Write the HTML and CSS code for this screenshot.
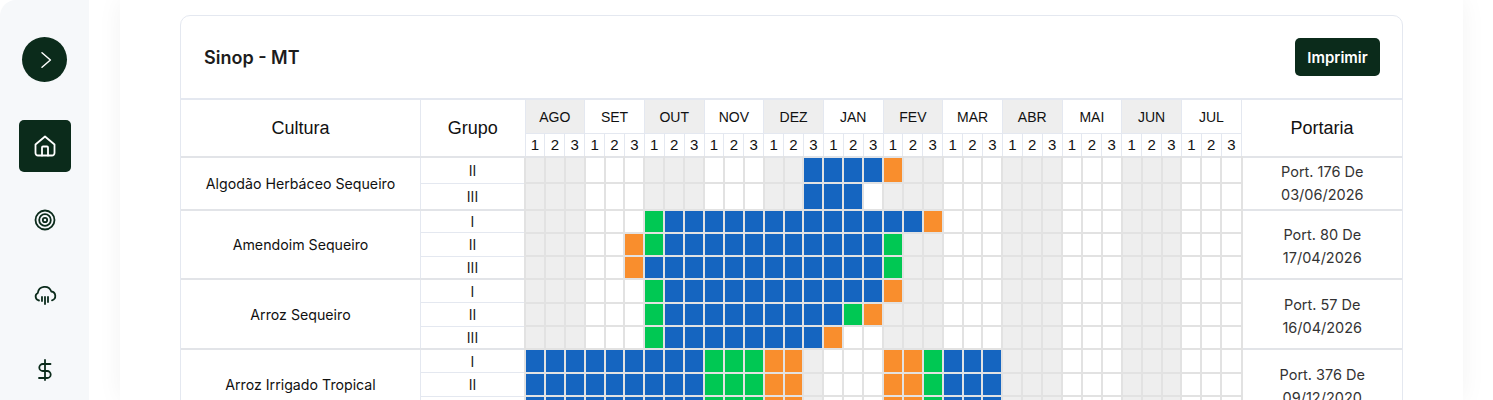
FILE: index.html
```html
<!DOCTYPE html>
<html lang="pt-BR">
<head>
    <meta charset="UTF-8">
    <title>Calendário de Plantio</title>
    <link rel="stylesheet" href="styles.css">
</head>
<body>
    <div class="app">
        <aside class="sidebar">
            <button class="toggle">
                <svg width="24" height="24" viewBox="0 0 24 24" fill="none" stroke="currentColor" stroke-width="1.5" stroke-linecap="round" stroke-linejoin="round"><path d="M9 4.800l8.400 7.200-8.400 7.200"/></svg>
            </button>
            <a class="nav-item active">
                <svg width="24" height="24" viewBox="0 0 24 24" fill="none" stroke="currentColor" stroke-width="1.8" stroke-linecap="round" stroke-linejoin="round"><path d="M2.500 10.500L12 2.500l9.500 8V19a2.500 2.500 0 0 1-2.500 2.500H5A2.500 2.500 0 0 1 2.500 19z"/><path d="M9 21.500v-8a1 1 0 0 1 1-1h4a1 1 0 0 1 1 1v8"/></svg>
            </a>
            <a class="nav-item">
                <svg width="24" height="24" viewBox="0 0 24 24" fill="none" stroke="currentColor" stroke-width="1.800"><circle cx="12" cy="12" r="9.500"/><circle cx="12" cy="12" r="5.800"/><circle cx="12" cy="12" r="2.200"/></svg>
            </a>
            <a class="nav-item">
                <svg width="24" height="24" viewBox="0 0 24 24" fill="none" stroke="currentColor" stroke-width="1.800" stroke-linecap="round" stroke-linejoin="round"><path d="M6 17.500A4 4 0 0 1 4.800 10 7 7 0 0 1 18.300 8.500 4.500 4.500 0 0 1 19 17.300"/><path d="M9 14v4M12 14v7M15 14v5"/></svg>
            </a>
            <a class="nav-item">
                <svg width="24" height="24" viewBox="0 0 24 24" fill="none" stroke="currentColor" stroke-width="1.800" stroke-linecap="round" stroke-linejoin="round"><path d="M12 2v20"/><path d="M17.500 6H9.800a3.500 3.500 0 0 0 0 7h4.400a3.500 3.500 0 0 1 0 7H6"/></svg>
            </a>
        </aside>
        <main class="panel">
            <section class="card">
                <header class="card-header">
                    <h2>Sinop - MT</h2>
                    <button class="print-btn">Imprimir</button>
                </header>
                <table class="calendar">
                    <thead id="calendarHead"></thead>
                    <tbody id="calendarBody"></tbody>
                </table>
            </section>
        </main>
    </div>
    <script src="script.js"></script>
</body>
</html>
```

FILE: styles.css
```css
* {
    box-sizing: border-box;
}
html, body {
    height: 100%;
}
body {
    margin: 0;
    overflow: hidden;
    font-family: Inter, "Liberation Sans", sans-serif;
    background-color: #fff;
    color: #111;
}
.app {
    display: flex;
    height: 400px;
    overflow: hidden;
}
.sidebar {
    width: 89px;
    flex-shrink: 0;
    display: flex;
    flex-direction: column;
    align-items: center;
    background-color: #f6f8fa;
    border-top-left-radius: 16px;
    padding-top: 37px;
}
.toggle {
    width: 45px;
    height: 45px;
    flex-shrink: 0;
    display: flex;
    align-items: center;
    justify-content: center;
    margin-bottom: 38px;
    padding: 0;
    border: none;
    border-radius: 50%;
    background-color: #0b2b1b;
    color: #fff;
}
.nav-item {
    width: 52px;
    height: 52px;
    flex-shrink: 0;
    display: flex;
    align-items: center;
    justify-content: center;
    margin-bottom: 23px;
    border-radius: 5px;
    color: #0b2b1b;
}
.nav-item.active {
    margin-bottom: 22px;
    background-color: #0b2b1b;
    color: #fff;
}
.panel {
    width: 1343px;
    margin-left: 31px;
    flex-shrink: 0;
    padding: 15px 60px 0;
    background-color: #fff;
    box-shadow: 0 0 24px rgba(0, 0, 0, 0.05);
}
.card {
    width: 1223px;
    border: 1px solid #e4e8f0;
    border-radius: 10px 10px 0 0;
    background-color: #fff;
}
.card-header {
    height: 83px;
    display: flex;
    align-items: center;
    justify-content: space-between;
    padding: 0 22px 0 23px;
    border-bottom: 1px solid #e4e8f0;
}
.card-header h2 {
    margin: 0;
    font-size: 18px;
    font-weight: 600;
    color: #1c1c1c;
}
.print-btn {
    height: 38px;
    width: 85px;
    padding: 0;
    border: none;
    border-radius: 5px;
    background-color: #0b2b1b;
    color: #fff;
    font-family: inherit;
    font-size: 15px;
    font-weight: 600;
}
.calendar {
    width: 1221px;
    table-layout: fixed;
    border-collapse: collapse;
    font-family: "Liberation Sans", sans-serif;
}
.calendar th, .calendar td {
    padding: 0;
    text-align: center;
    font-weight: 400;
    border: 1px solid #e4e8f0;
}
.calendar tr > :first-child {
    border-left: none;
}
.calendar tr > :last-child {
    border-right: none;
}
.col-cultura {
    width: 239.500px;
}
.col-grupo {
    width: 104.500px;
}
.col-portaria {
    width: 160.500px;
}
.head-title {
    padding-top: 2px;
    font-size: 18px;
}
.calendar th.head-title {
    padding-top: 2px;
}
.month {
    height: 34px;
    font-size: 14px;
}
.decade {
    height: 23px;
    font-size: 15px;
}
.shaded {
    background-color: #eee;
}
.crop, .group, .portaria {
    font-family: Inter, "Liberation Sans", sans-serif;
    font-size: 14px;
}
.crop {
    font-size: 14.200px;
}
.portaria {
    font-size: 14.500px;
    line-height: 23px;
    color: #333;
}
.row-b .portaria {
    padding-top: 3px;
}
.group {
    color: #222;
}
.calendar tbody td.cell {
    border: 2px solid #e2e2e2;
    padding: 0;
}
.calendar tbody tr.first-row td {
    border-top-width: 2px;
    border-top-color: #e2e4e8;
}
.cell.plant {
    background-color: #1565c0;
    border-color: #e8e8e8;
}
.cell.green {
    background-color: #00c853;
}
.cell.orange {
    background-color: #f98e2d;
}
.row-a {
    height: 26.500px;
}
.row-b {
    height: 23.340px;
}
```

FILE: script.js
```js
const MONTHS = ['AGO', 'SET', 'OUT', 'NOV', 'DEZ', 'JAN', 'FEV', 'MAR', 'ABR', 'MAI', 'JUN', 'JUL'];

// b = blue, g = green, o = orange, . = empty; one letter per decade, starting at AGO 1
const CROPS = [
    {
        name: 'Algodão Herbáceo Sequeiro', portaria: 'Port. 176 De<br>03/06/2026', rowClass: 'row-a',
        rows: [
            ['II', '..............bbbbo'],
            ['III', '..............bbb']
        ]
    },
    {
        name: 'Amendoim Sequeiro', portaria: 'Port. 80 De<br>17/04/2026', rowClass: 'row-b',
        rows: [
            ['I', '......gbbbbbbbbbbbbbo'],
            ['II', '.....ogbbbbbbbbbbbg'],
            ['III', '.....obbbbbbbbbbbbg']
        ]
    },
    {
        name: 'Arroz Sequeiro', portaria: 'Port. 57 De<br>16/04/2026', rowClass: 'row-b',
        rows: [
            ['I', '......gbbbbbbbbbbbo'],
            ['II', '......gbbbbbbbbbgo'],
            ['III', '......gbbbbbbbbo']
        ]
    },
    {
        name: 'Arroz Irrigado Tropical', portaria: 'Port. 376 De<br>09/12/2020', rowClass: 'row-b',
        rows: [
            ['I', 'bbbbbbbbbgggoo....oogbbb'],
            ['II', 'bbbbbbbbbgggoo....oogbbb'],
            ['III', 'bbbbbbbbbgggoo....oogbbb']
        ]
    }
];

const STAGE_CLASS = { b: 'plant', g: 'plant green', o: 'plant orange' };

function isShaded(col) {
    return Math.floor(col / 3) % 2 === 0;
}

function buildHead() {
    let first = '<tr><th class="col-cultura head-title" rowspan="2">Cultura</th><th class="col-grupo head-title" rowspan="2">Grupo</th>';
    let second = '<tr>';
    MONTHS.forEach((month, m) => {
        const shade = m % 2 === 0 ? ' shaded' : '';
        first += `<th class="month${shade}" colspan="3">${month}</th>`;
        for (let d = 1; d <= 3; d++) {
            second += `<th class="decade">${d}</th>`;
        }
    });
    first += '<th class="col-portaria head-title" rowspan="2">Portaria</th></tr>';
    document.getElementById('calendarHead').innerHTML = first + second + '</tr>';
}

function buildBody() {
    let html = '';
    CROPS.forEach(crop => {
        crop.rows.forEach((row, r) => {
            html += `<tr class="${crop.rowClass}${r === 0 ? ' first-row' : ''}">`;
            if (r === 0) {
                html += `<td class="crop" rowspan="${crop.rows.length}">${crop.name}</td>`;
            }
            html += `<td class="group">${row[0]}</td>`;
            for (let c = 0; c < 36; c++) {
                const stage = STAGE_CLASS[row[1][c]];
                const cls = stage ? stage : (isShaded(c) ? 'shaded' : '');
                html += `<td class="cell ${cls}"></td>`;
            }
            if (r === 0) {
                html += `<td class="portaria" rowspan="${crop.rows.length}">${crop.portaria}</td>`;
            }
            html += '</tr>';
        });
    });
    document.getElementById('calendarBody').innerHTML = html;
}

buildHead();
buildBody();
```
